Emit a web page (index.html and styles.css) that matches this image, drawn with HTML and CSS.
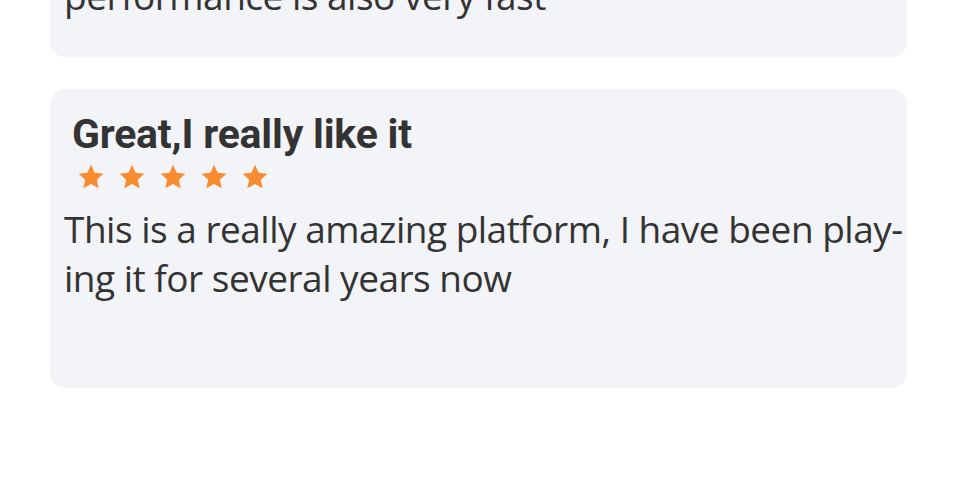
FILE: index.html
```html
<!DOCTYPE html>
<html lang="en">
<head>
<meta charset="utf-8">
<link rel="stylesheet" href="styles.css">
</head>
<body>
<div class="reviews">
  <div class="card">
    <div class="title">Smooth and stable</div>
    <div class="stars">
      <svg class="star" viewBox="0 0 24 24"><polygon points="12,1.5 15.1,8.4 22.6,9.2 17,14.3 18.6,21.7 12,17.9 5.4,21.7 7,14.3 1.4,9.2 8.9,8.4"/></svg>
      <svg class="star" viewBox="0 0 24 24"><polygon points="12,1.5 15.1,8.4 22.6,9.2 17,14.3 18.6,21.7 12,17.9 5.4,21.7 7,14.3 1.4,9.2 8.9,8.4"/></svg>
      <svg class="star" viewBox="0 0 24 24"><polygon points="12,1.5 15.1,8.4 22.6,9.2 17,14.3 18.6,21.7 12,17.9 5.4,21.7 7,14.3 1.4,9.2 8.9,8.4"/></svg>
      <svg class="star" viewBox="0 0 24 24"><polygon points="12,1.5 15.1,8.4 22.6,9.2 17,14.3 18.6,21.7 12,17.9 5.4,21.7 7,14.3 1.4,9.2 8.9,8.4"/></svg>
      <svg class="star" viewBox="0 0 24 24"><polygon points="12,1.5 15.1,8.4 22.6,9.2 17,14.3 18.6,21.7 12,17.9 5.4,21.7 7,14.3 1.4,9.2 8.9,8.4"/></svg>
    </div>
    <p class="text">The games load quickly and run smoothly,<br>the withdrawal is simple and safe, and the<br>performance is also very fast</p>
  </div>
  <div class="card">
    <div class="title">Great,I really like it</div>
    <div class="stars">
      <svg class="star" viewBox="0 0 24 24"><polygon points="12,1.5 15.1,8.4 22.6,9.2 17,14.3 18.6,21.7 12,17.9 5.4,21.7 7,14.3 1.4,9.2 8.9,8.4"/></svg>
      <svg class="star" viewBox="0 0 24 24"><polygon points="12,1.5 15.1,8.4 22.6,9.2 17,14.3 18.6,21.7 12,17.9 5.4,21.7 7,14.3 1.4,9.2 8.9,8.4"/></svg>
      <svg class="star" viewBox="0 0 24 24"><polygon points="12,1.5 15.1,8.4 22.6,9.2 17,14.3 18.6,21.7 12,17.9 5.4,21.7 7,14.3 1.4,9.2 8.9,8.4"/></svg>
      <svg class="star" viewBox="0 0 24 24"><polygon points="12,1.5 15.1,8.4 22.6,9.2 17,14.3 18.6,21.7 12,17.9 5.4,21.7 7,14.3 1.4,9.2 8.9,8.4"/></svg>
      <svg class="star" viewBox="0 0 24 24"><polygon points="12,1.5 15.1,8.4 22.6,9.2 17,14.3 18.6,21.7 12,17.9 5.4,21.7 7,14.3 1.4,9.2 8.9,8.4"/></svg>
    </div>
    <p class="text">This is a really amazing platform, I have been play&shy;ing it for several years now</p>
  </div>
</div>
</body>
</html>
```
FILE: styles.css
```css
html, body {
  margin: 0;
  padding: 0;
  background: #ffffff;
}
.reviews {
  width: 857px;
  margin: -242px 0 0 50px;
  display: flex;
  flex-direction: column;
  gap: 32px;
}
.card {
  box-sizing: border-box;
  height: 299px;
  background: #f3f4f8;
  border-radius: 15px;
  padding: 21px 0 0 14px;
}
.title {
  font-family: Roboto, "Liberation Sans", sans-serif;
  font-weight: 700;
  font-size: 41px;
  line-height: 48px;
  color: #333333;
  padding-left: 8px;
  letter-spacing: -0.2px;
}
.stars {
  display: flex;
  gap: 13px;
  margin-top: 5px;
  padding-left: 13px;
}
.star {
  width: 28px;
  height: 28px;
  fill: #f98c2e;
  display: block;
}
.text {
  margin: 13px 0 0 0;
  font-family: "Open Sans", "Liberation Sans", sans-serif;
  font-weight: 400;
  font-size: 37px;
  line-height: 49px;
  letter-spacing: -0.5px;
  color: #333333;
  hyphens: manual;
}
```
